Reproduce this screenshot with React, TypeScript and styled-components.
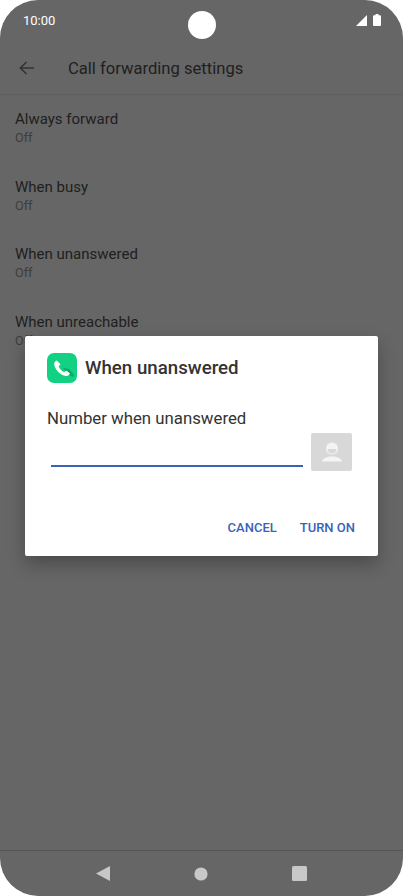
import styled, { createGlobalStyle } from "styled-components";

const GlobalStyle = createGlobalStyle`
  html, body {
    margin: 0;
    padding: 0;
    background: #fff;
    font-family: Roboto, "Liberation Sans", sans-serif;
  }
`;

const Phone = styled.div`
  position: relative;
  width: 403px;
  height: 896px;
  display: flex;
  flex-direction: column;
  overflow: hidden;
  border-radius: 38px;
  background: #666666;
`;

const StatusBar = styled.div`
  position: relative;
  height: 42px;
  flex: none;
  display: flex;
  align-items: flex-start;
  justify-content: space-between;
  padding: 13px 22px 0 23px;
  box-sizing: border-box;
`;

const Time = styled.span`
  font-size: 13px;
  line-height: 15px;
  color: #fff;
`;

const Camera = styled.div`
  position: absolute;
  left: 188px;
  top: 11px;
  width: 28px;
  height: 28px;
  border-radius: 50%;
  background: #fff;
`;

const StatusIcons = styled.div`
  display: flex;
  align-items: center;
  gap: 6px;
  height: 14px;
`;

const AppBar = styled.div`
  height: 53px;
  flex: none;
  display: flex;
  align-items: center;
  gap: 34px;
  padding: 0 19px;
  box-sizing: border-box;
  border-bottom: 1px solid #5e5e5e;
`;

const PageTitle = styled.span`
  font-size: 16.6px;
  color: #202020;
`;

const List = styled.div`
  flex: 1;
  display: flex;
  flex-direction: column;
  padding: 15px 15px 0;
`;

const Row = styled.div`
  height: 67.6px;
  flex: none;
`;

const RowTitle = styled.div`
  font-size: 15px;
  line-height: 19px;
  color: #202020;
`;

const RowValue = styled.div`
  font-size: 12.6px;
  line-height: 18px;
  color: #3d3d3d;
`;

const NavBar = styled.div`
  height: 45px;
  flex: none;
  display: flex;
  align-items: center;
  justify-content: center;
  gap: 84px;
  border-top: 1px solid #555555;
`;

const Dialog = styled.div`
  position: absolute;
  left: 25px;
  top: 336px;
  width: 353px;
  height: 220px;
  box-sizing: border-box;
  display: flex;
  flex-direction: column;
  padding: 17px 26px 0 22px;
  background: #fff;
  border-radius: 2px;
  box-shadow: 0 8px 18px rgba(0, 0, 0, 0.28);
`;

const DialogHeader = styled.div`
  display: flex;
  align-items: center;
  gap: 8px;
  height: 30px;
`;

const DialogTitle = styled.span`
  font-size: 18.7px;
  font-weight: 500;
  color: #333333;
`;

const FieldLabel = styled.div`
  margin-top: 25px;
  font-size: 16.8px;
  line-height: 20px;
  color: #333333;
`;

const InputRow = styled.div`
  display: flex;
  align-items: flex-end;
  justify-content: space-between;
  margin-top: 5px;
  padding-left: 4px;
`;

const NumberInput = styled.div`
  width: 252px;
  height: 2px;
  margin-bottom: 4px;
  background: #3a62b8;
`;

const ContactButton = styled.div`
  width: 41px;
  height: 38px;
  display: flex;
  align-items: center;
  justify-content: center;
  border-radius: 2px;
  background: #d8d8d8;
`;

const Actions = styled.div`
  display: flex;
  justify-content: flex-end;
  gap: 23px;
  margin-top: 49px;
  margin-right: -3px;
`;

const ActionButton = styled.span`
  font-size: 13px;
  line-height: 16px;
  font-weight: 500;
  color: #3a62b8;
`;

const rows = [
  "Always forward",
  "When busy",
  "When unanswered",
  "When unreachable",
];

export default function App() {
  return (
    <>
      <GlobalStyle />
      <Phone>
        <StatusBar>
          <Time>10:00</Time>
          <Camera />
          <StatusIcons>
            <svg width="11" height="11" viewBox="0 0 11 11">
              <path d="M11 0v11H0z" fill="#fff" />
            </svg>
            <svg width="8" height="12" viewBox="0 0 8 12">
              <path d="M2.5 0h3v1.2H7a1 1 0 0 1 1 1V11a1 1 0 0 1-1 1H1a1 1 0 0 1-1-1V2.2a1 1 0 0 1 1-1h1.5z" fill="#fff" />
            </svg>
          </StatusIcons>
        </StatusBar>
        <AppBar>
          <svg width="15" height="14" viewBox="0 0 15 14" fill="none" stroke="#333" strokeWidth="1.5">
            <path d="M15 7H1.500M7.500 1 1.300 7l6.200 6" />
          </svg>
          <PageTitle>Call forwarding settings</PageTitle>
        </AppBar>
        <List>
          {rows.map((row) => (
            <Row key={row}>
              <RowTitle>{row}</RowTitle>
              <RowValue>Off</RowValue>
            </Row>
          ))}
        </List>
        <NavBar>
          <svg width="14" height="15" viewBox="0 0 14 15">
            <path d="M14 0v15L0 7.500z" fill="#c8c8c8" />
          </svg>
          <svg width="14" height="14" viewBox="0 0 14 14">
            <circle cx="7" cy="7" r="6.600" fill="#c8c8c8" />
          </svg>
          <svg width="15" height="15" viewBox="0 0 15 15">
            <rect width="15" height="15" rx="1.500" fill="#c8c8c8" />
          </svg>
        </NavBar>
        <Dialog>
          <DialogHeader>
            <svg width="30" height="30" viewBox="0 0 30 30">
              <rect width="30" height="30" rx="7" fill="#12d183" />
              <path d="M16 15l6 7 4 2 1-2-5-6z" fill="#0aa868" />
              <path d="M10 7.500c-1.500.6-3 1.800-2.800 3.800.4 5 6 11 11.500 11.700 2 .2 3.500-1 4.300-2.600l-3.800-2.900-2 1.700c-2.500-1-4.700-3.400-5.600-5.900l1.900-1.800z" fill="#fff" />
            </svg>
            <DialogTitle>When unanswered</DialogTitle>
          </DialogHeader>
          <FieldLabel>Number when unanswered</FieldLabel>
          <InputRow>
            <NumberInput />
            <ContactButton>
              <svg width="20" height="20" viewBox="0 0 20 20">
                <circle cx="10" cy="6.500" r="6" fill="#f4f4f4" />
                <path d="M5.500 7h9a4.500 4.500 0 0 1-9 0z" fill="#d8d8d8" />
                <path d="M0 19.500c1-3.500 5-5 10-5s9 1.500 10 5z" fill="#f4f4f4" />
              </svg>
            </ContactButton>
          </InputRow>
          <Actions>
            <ActionButton>CANCEL</ActionButton>
            <ActionButton>TURN ON</ActionButton>
          </Actions>
        </Dialog>
      </Phone>
    </>
  );
}
